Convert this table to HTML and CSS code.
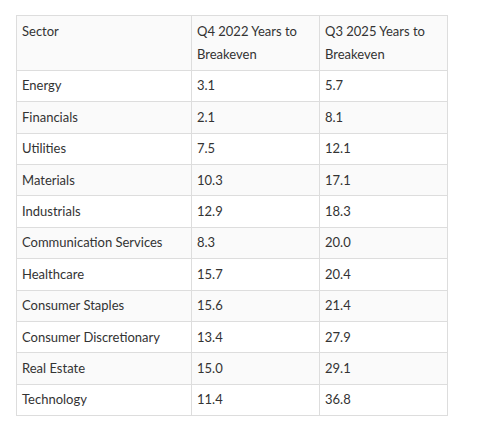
FILE: index.html
```html
<!DOCTYPE html>
<html>
<head>
<meta charset="utf-8">
<link rel="stylesheet" href="styles.css">
</head>
<body>
<div class="wrap">
<table class="data">
<thead>
<tr><th class="c1">Sector</th><th class="c2">Q4 2022 Years to Breakeven</th><th class="c3">Q3 2025 Years to Breakeven</th></tr>
</thead>
<tbody>
<tr><td>Energy</td><td>3.1</td><td>5.7</td></tr>
<tr><td>Financials</td><td>2.1</td><td>8.1</td></tr>
<tr><td>Utilities</td><td>7.5</td><td>12.1</td></tr>
<tr><td>Materials</td><td>10.3</td><td>17.1</td></tr>
<tr><td>Industrials</td><td>12.9</td><td>18.3</td></tr>
<tr><td>Communication Services</td><td>8.3</td><td>20.0</td></tr>
<tr><td>Healthcare</td><td>15.7</td><td>20.4</td></tr>
<tr><td>Consumer Staples</td><td>15.6</td><td>21.4</td></tr>
<tr><td>Consumer Discretionary</td><td>13.4</td><td>27.9</td></tr>
<tr><td>Real Estate</td><td>15.0</td><td>29.1</td></tr>
<tr><td>Technology</td><td>11.4</td><td>36.8</td></tr>
</tbody>
</table>
</div>
</body>
</html>
```
FILE: styles.css
```css
html, body {
  margin: 0;
  padding: 0;
  background: #ffffff;
}
.wrap {
  padding: 15px 0 0 16px;
}
.data {
  border-collapse: collapse;
  font-family: "Lato", "Open Sans", sans-serif;
  font-size: 13px;
  line-height: 23.4px;
  color: #333333;
  width: 432px;
  table-layout: fixed;
}
.data th, .data td {
  border: 1px solid #dddddd;
  padding: 3.5px 5px;
  text-align: left;
  vertical-align: top;
  font-weight: normal;
}
.data .c1 { width: 164px; }
.data .c2 { width: 117px; }
.data thead tr { background: #fafafa; }
.data tbody tr:nth-child(even) { background: #fafafa; }
```
